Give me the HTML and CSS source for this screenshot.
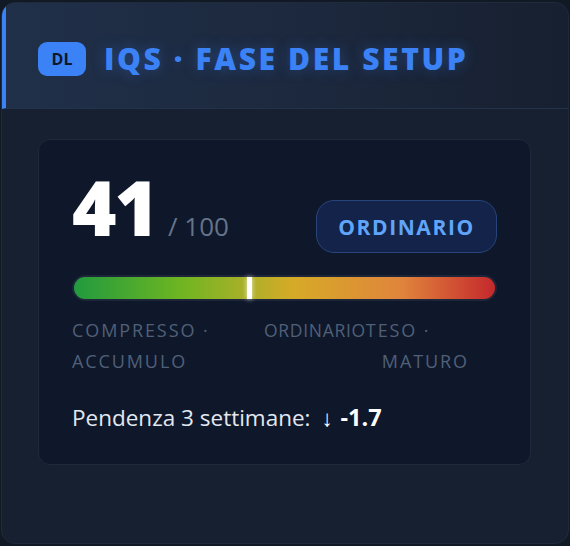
FILE: index.html
```html
<!DOCTYPE html>
<html lang="it">
<head>
<meta charset="utf-8">
<link rel="stylesheet" href="styles.css">
</head>
<body>
<section class="card">
  <header class="card-head">
    <span class="tag">DL</span>
    <h2 class="title">IQS · FASE DEL SETUP</h2>
  </header>
  <div class="panel">
    <div class="score-row">
      <div class="score"><span class="num">41</span><span class="max">/ 100</span></div>
      <span class="badge">ORDINARIO</span>
    </div>
    <div class="bar">
      <span class="marker" style="left: 41.5%"></span>
    </div>
    <div class="labels">
      <span class="lab lab-l">COMPRESSO · ACCUMULO</span>
      <span class="lab lab-m">ORDINARIO</span>
      <span class="lab lab-r">TESO · MATURO</span>
    </div>
    <p class="slope">Pendenza 3 settimane: <span class="arrow">↓</span> <b>-1.7</b></p>
  </div>
</section>
</body>
</html>
```
FILE: styles.css
```css
html, body { margin: 0; }
body {
  background: #111925;
  padding: 2px 1px 1px 1px;
  font-family: "Open Sans", "Noto Sans", sans-serif;
}
.card {
  box-sizing: border-box;
  height: 542px;
  border: 1px solid #1f2b3d;
  border-radius: 14px;
  background: #172030;
  overflow: hidden;
}
.card-head {
  box-sizing: border-box;
  height: 106px;
  display: flex;
  align-items: center;
  gap: 18px;
  padding-left: 32px;
  padding-top: 6px;
  border-left: 4px solid #3b82f6;
  border-bottom: 1px solid #233149;
  background: linear-gradient(90deg, #203049 0%, #1c283d 55%, #172030 100%);
}
.tag {
  width: 48px;
  height: 34px;
  border-radius: 9px;
  background: #3b82f6;
  color: #0f172a;
  font-weight: 700;
  font-size: 16px;
  display: flex;
  align-items: center;
  justify-content: center;
}
.title {
  margin: 0;
  color: #3b82f6;
  font-size: 30px;
  font-weight: 800;
  letter-spacing: 2.6px;
  text-shadow: 0 0 14px rgba(59,130,246,0.35);
}
.panel {
  margin: 30px 37px 0 36px;
  border: 1px solid #1e293b;
  border-radius: 12px;
  background: #0f172a;
  padding: 29px 33px 31px 33px;
}
.score-row {
  display: flex;
  justify-content: space-between;
  align-items: flex-start;
}
.score { display: flex; align-items: baseline; gap: 11px; }
.num {
  color: #ffffff;
  font-size: 76px;
  font-weight: 800;
  line-height: 1;
  letter-spacing: -2px;
}
.max { color: #64748b; font-size: 26px; }
.badge {
  box-sizing: border-box;
  width: 181px;
  height: 53px;
  margin-top: 31px;
  display: flex;
  align-items: center;
  justify-content: center;
  border: 1.5px solid #27457a;
  border-radius: 18px;
  background: #13234a;
  color: #60a5fa;
  font-weight: 700;
  font-size: 21px;
  letter-spacing: 1.6px;
}
.bar {
  position: relative;
  margin-top: 22px;
  height: 26px;
  box-sizing: border-box;
  border: 2px solid #1c2638;
  border-radius: 13px;
  background: linear-gradient(90deg, #219a3e 0%, #6db522 25%, #a6b028 40%, #d6aa27 52%, #e0843c 78%, #c4282c 100%);
}
.marker {
  position: absolute;
  top: 0;
  bottom: 0;
  width: 5px;
  margin-left: -2px;
  background: #ffffff;
  box-shadow: 0 0 5px rgba(255,255,255,0.8);
}
.labels {
  display: flex;
  margin-top: 14px;
  color: #506078;
  font-size: 18px;
  letter-spacing: 1.9px;
  line-height: 31px;
}
.lab-l { width: 192px; flex: none; }
.lab-m { flex: none; white-space: nowrap; font-size: 17.5px; letter-spacing: 0.7px; }
.lab-r { width: 110px; flex: none; padding-left: 16px; text-indent: -16px; }
.slope {
  margin: 25px 0 0 0;
  color: #e2e8f0;
  font-size: 22.5px;
  line-height: 30px;
}
.arrow { color: #ffffff; margin-left: 5px; margin-right: 2px; }
.slope b { color: #ffffff; font-weight: 700; font-size: 23.5px; }
```
